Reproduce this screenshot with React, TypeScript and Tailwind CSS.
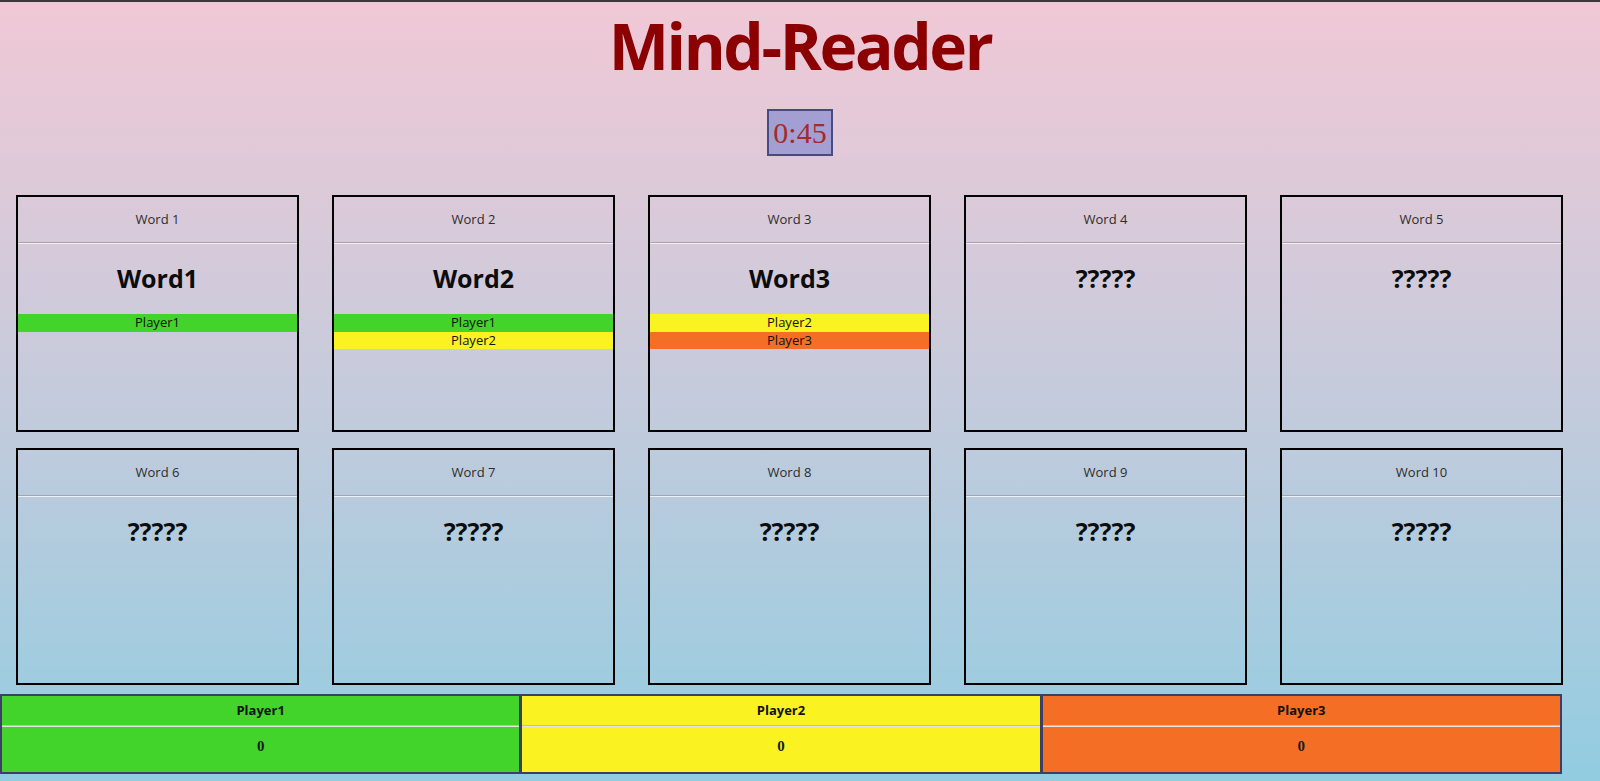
import React from 'react';

type Guess = { player: string; color: string };
type Slot = { label: string; word: string; guesses: Guess[] };

const GREEN = 'bg-[#42d42b]';
const YELLOW = 'bg-[#faf321]';
const ORANGE = 'bg-[#f46f25]';

const slots: Slot[] = [
  { label: 'Word 1', word: 'Word1', guesses: [{ player: 'Player1', color: GREEN }] },
  {
    label: 'Word 2',
    word: 'Word2',
    guesses: [
      { player: 'Player1', color: GREEN },
      { player: 'Player2', color: YELLOW },
    ],
  },
  {
    label: 'Word 3',
    word: 'Word3',
    guesses: [
      { player: 'Player2', color: YELLOW },
      { player: 'Player3', color: ORANGE },
    ],
  },
  { label: 'Word 4', word: '?????', guesses: [] },
  { label: 'Word 5', word: '?????', guesses: [] },
  { label: 'Word 6', word: '?????', guesses: [] },
  { label: 'Word 7', word: '?????', guesses: [] },
  { label: 'Word 8', word: '?????', guesses: [] },
  { label: 'Word 9', word: '?????', guesses: [] },
  { label: 'Word 10', word: '?????', guesses: [] },
];

const players = [
  { name: 'Player1', score: 0, color: GREEN },
  { name: 'Player2', score: 0, color: YELLOW },
  { name: 'Player3', score: 0, color: ORANGE },
];

const WordCard: React.FC<{ slot: Slot }> = ({ slot }) => (
  <div className="w-[283px] h-[237px] border-2 border-black flex flex-col">
    <div className="h-[45px] pt-px flex items-center justify-center text-[13px] text-[#2c2c2c]">{slot.label}</div>
    {/* inset hr */}
    <div className="h-[2px] border-t border-[#a9a3ad] border-b border-b-white/70" />
    <h2 className="mt-[18px] mb-[20px] text-[25px] leading-[32px] font-bold text-center text-[#0c0c0c]">{slot.word}</h2>
    {slot.guesses.map(g => (
      <div key={g.player} className={`${g.color} h-[17.7px] leading-[17.7px] text-[13px] text-center text-[#111]`}>
        {g.player}
      </div>
    ))}
  </div>
);

export default function App() {
  return (
    <div className="min-h-screen w-full border-t-2 border-[#3a3a3a] bg-linear-to-b from-[#f1c8d6] to-[#91cce1] font-['Open_Sans','Noto_Sans',sans-serif]">
      <h1 className="text-center text-[64px] leading-[88px] font-bold text-[#8b0000] tracking-[-2.4px]">Mind-Reader</h1>

      <div className="flex justify-center mt-[19px]">
        <div className="border-2 border-[#4a4a82] bg-[#a49fd2] px-[4px] text-[30px] leading-[43px] text-[#a52a2a] font-['Liberation_Serif',serif]">
          0:45
        </div>
      </div>

      {/* Word board */}
      <div className="grid grid-cols-[repeat(5,283px)] gap-x-[33px] gap-y-[16px] pl-4 mt-[39px]">
        {slots.map(s => (
          <WordCard key={s.label} slot={s} />
        ))}
      </div>

      {/* Scoreboard */}
      <div className="mt-[9px] w-[1562px] flex border-2 border-[#3e3e66]">
        {players.map((p, i) => (
          <div key={p.name} className={`${p.color} flex-1 flex flex-col ${i > 0 ? 'border-l-[3px] border-[#3e3e66]' : ''}`}>
            <div className="h-[29px] flex items-center justify-center text-[13px] font-bold text-[#111]">{p.name}</div>
            <div className="h-[2px] border-t border-[#bdbdbd] border-b border-b-[#e4e4e4]" />
            <div className="h-[45px] pb-[6px] flex items-center justify-center text-[15px] font-bold text-[#1a1a1a] font-['Liberation_Serif',serif]">
              {p.score}
            </div>
          </div>
        ))}
      </div>
    </div>
  );
}
